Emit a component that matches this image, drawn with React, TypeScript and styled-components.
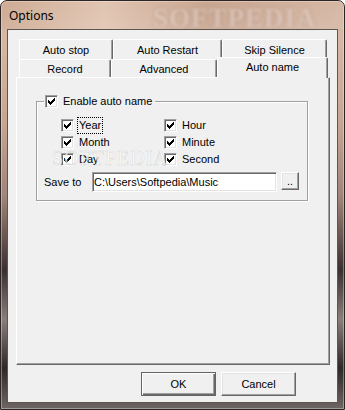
import React from "react";
import styled, { createGlobalStyle, css } from "styled-components";

const GlobalStyle = createGlobalStyle`
  html, body {
    margin: 0;
    padding: 0;
    background: #ffffff;
  }
  body {
    font-family: "Liberation Sans", Arial, sans-serif;
    font-size: 11px;
    color: #000;
  }
`;

const TOP_TABS = [
  { label: "Auto stop", width: 94 },
  { label: "Auto Restart", width: 109 },
  { label: "Skip Silence", width: 105 },
];

const FRONT_TABS = [
  { label: "Record", width: 92, selected: false },
  { label: "Advanced", width: 106, selected: false },
  { label: "Auto name", width: 111, selected: true },
];

// row order: left column, right column
const NAME_PARTS = ["Year", "Hour", "Month", "Minute", "Day", "Second"];

// classic 7x7 check glyph, one 3px column per x
const CHECK_PATH = [2, 3, 4, 3, 2, 1, 0]
  .map((y, x) => `M${x} ${y}h1v3h-1z`)
  .join("");

const Check = () => (
  <CheckBox>
    <svg width="7" height="7" viewBox="0 0 7 7" shapeRendering="crispEdges">
      <path d={CHECK_PATH} fill="#000" />
    </svg>
  </CheckBox>
);

const App = () => {
  return (
    <>
      <GlobalStyle />
      <Window>
        <TitleBar>
          <Title>Options</Title>
        </TitleBar>
        <Client>
          <Tabs>
            <TabRow $h={20}>
              {TOP_TABS.map((t) => (
                <Tab key={t.label} $w={t.width} $h={20}>
                  {t.label}
                </Tab>
              ))}
            </TabRow>
            <TabRow $h={18}>
              {FRONT_TABS.map((t) => (
                <Tab
                  key={t.label}
                  $w={t.width}
                  $h={t.selected ? 21 : 18}
                  $selected={t.selected}
                >
                  {t.label}
                </Tab>
              ))}
            </TabRow>
            <Panel>
              <Group>
                <Legend>
                  <Check />
                  <span>Enable auto name</span>
                </Legend>
                <CheckGrid>
                  {NAME_PARTS.map((name) => (
                    <CheckItem key={name}>
                      <Check />
                      <ItemLabel $focused={name === "Year"}>{name}</ItemLabel>
                    </CheckItem>
                  ))}
                </CheckGrid>
                <SaveRow>
                  <SaveLabel>Save to</SaveLabel>
                  <PathField readOnly value="C:\Users\Softpedia\Music" />
                  <BrowseButton>..</BrowseButton>
                </SaveRow>
              </Group>
            </Panel>
          </Tabs>
          <ButtonRow>
            <DialogButton $default>OK</DialogButton>
            <DialogButton>Cancel</DialogButton>
          </ButtonRow>
        </Client>
      </Window>
    </>
  );
};

const Window = styled.div`
  box-sizing: border-box;
  width: 345px;
  height: 410px;
  display: flex;
  flex-direction: column;
  padding: 0 6px 6px 6px;
  border: 1px solid #2e2624;
  border-radius: 7px 7px 0 0;
  background: linear-gradient(
    180deg,
    #cfae98 0%,
    #d6b8a4 8%,
    #c6a692 30%,
    #a08478 48%,
    #3a3030 66%,
    #8a7e7a 78%,
    #2e2828 90%,
    #6e6664 100%
  );
  box-shadow: inset 0 0 0 1px rgba(255, 255, 255, 0.35);
  overflow: hidden;
`;

/* blurred site watermark sits in the glass, drawn as a decoration */
const TitleBar = styled.div`
  height: 28px;
  flex: none;
  display: flex;
  align-items: center;
  position: relative;
  margin: 0 -6px;
  padding: 0 7px;
  background: linear-gradient(
    90deg,
    rgba(200, 160, 135, 0.2) 0%,
    rgba(255, 238, 225, 0.35) 30%,
    rgba(150, 110, 90, 0.12) 60%,
    rgba(230, 210, 200, 0.25) 100%
  );

  &::after {
    content: "SOFTPEDIA";
    position: absolute;
    left: 152px;
    top: 2px;
    font-family: "Liberation Serif", serif;
    font-weight: bold;
    font-size: 27px;
    letter-spacing: 1px;
    color: rgba(255, 242, 236, 0.5);
    text-shadow: 0 0 3px rgba(110, 70, 55, 0.35);
    filter: blur(1.4px);
    pointer-events: none;
  }
`;

const Title = styled.span`
  font-family: "Noto Sans", "Open Sans", sans-serif;
  font-size: 12px;
  color: #000;
  margin-left: 1px;
  margin-top: 1px;
`;

const Client = styled.div`
  flex: 1;
  display: flex;
  flex-direction: column;
  padding: 9px 0 0 8px;
  background: #f0f0f0;
  border: 1px solid #5e5450;
`;

const Tabs = styled.div`
  width: 314px;
  display: flex;
  flex-direction: column;
`;

const TabRow = styled.div<{ $h: number }>`
  height: ${(p) => p.$h}px;
  display: flex;
  align-items: flex-end;
  margin-left: 3px;
`;

const Tab = styled.div<{ $w: number; $h: number; $selected?: boolean }>`
  box-sizing: border-box;
  flex: none;
  width: ${(p) => p.$w}px;
  height: ${(p) => p.$h}px;
  display: flex;
  align-items: center;
  justify-content: center;
  background: #f0f0f0;
  border-top: 1px solid #ffffff;
  border-left: 1px solid #ffffff;
  border-right: 1px solid #696969;
  border-radius: 2px 2px 0 0;
  box-shadow: inset -1px 0 0 #a0a0a0;
  white-space: nowrap;
  ${(p) =>
    p.$selected &&
    css`
      position: relative;
      z-index: 1;
      margin-bottom: -1px;
      padding-bottom: 2px;
    `}
`;

/* page watermark over the panel, as in the screenshot */
const Panel = styled.div`
  position: relative;
  box-sizing: border-box;
  height: 288px;
  padding: 15px 0 0 19px;
  border-top: 1px solid #ffffff;
  border-left: 1px solid #ffffff;
  border-right: 1px solid #696969;
  border-bottom: 1px solid #696969;
  box-shadow: inset -1px -1px 0 #a0a0a0;

  &::after {
    content: "SOFTPEDIA";
    position: absolute;
    left: 35px;
    top: 69px;
    font-family: "Liberation Serif", serif;
    font-size: 20px;
    letter-spacing: 1px;
    color: rgba(255, 255, 255, 0.75);
    -webkit-text-stroke: 0.6px rgba(150, 150, 150, 0.3);
    pointer-events: none;
  }
`;

const Group = styled.fieldset`
  box-sizing: border-box;
  width: 272px;
  margin: 0;
  padding: 8px 8px 8px 7px;
  min-width: 0;
  border: 1px solid #a0a0a0;
  box-shadow: 1px 1px 0 #ffffff, inset 1px 1px 0 #ffffff;
`;

const Legend = styled.legend`
  display: flex;
  align-items: center;
  gap: 5px;
  height: 16px;
  padding: 0 3px 0 1px;
  background: #f0f0f0;
`;

const CheckBox = styled.span`
  box-sizing: border-box;
  flex: none;
  width: 13px;
  height: 13px;
  display: flex;
  align-items: center;
  justify-content: center;
  background: #ffffff;
  border: 1px solid;
  border-color: #a0a0a0 #ffffff #ffffff #a0a0a0;
  box-shadow: inset 1px 1px 0 #696969, inset -1px -1px 0 #e3e3e3;
`;

const CheckGrid = styled.div`
  display: grid;
  grid-template-columns: 103px auto;
  grid-auto-rows: 17px;
  margin-left: 17px;
`;

const CheckItem = styled.div`
  display: flex;
  align-items: center;
  gap: 3px;
`;

const ItemLabel = styled.span<{ $focused?: boolean }>`
  box-sizing: border-box;
  height: 17px;
  line-height: 15px;
  padding: 0 1px;
  border: 1px dotted ${(p) => (p.$focused ? "#000" : "transparent")};
`;

const SaveRow = styled.div`
  display: flex;
  align-items: flex-start;
  margin-top: 4px;
`;

const SaveLabel = styled.span`
  width: 48px;
  line-height: 20px;
  flex: none;
`;

const PathField = styled.input`
  box-sizing: border-box;
  width: 185px;
  height: 20px;
  margin: 0;
  padding: 0 0 0 1px;
  font-family: "Liberation Sans", Arial, sans-serif;
  font-size: 11px;
  color: #000;
  background: #ffffff;
  border: 1px solid;
  border-color: #a0a0a0 #ffffff #ffffff #a0a0a0;
  box-shadow: inset 1px 1px 0 #696969, inset -1px -1px 0 #e3e3e3;
  outline: none;
`;

const RaisedButton = css`
  box-sizing: border-box;
  margin: 0;
  padding: 0;
  font-family: "Liberation Sans", Arial, sans-serif;
  font-size: 11px;
  color: #000;
  background: #f0f0f0;
  border: 1px solid;
  border-color: #ffffff #696969 #696969 #ffffff;
  box-shadow: inset -1px -1px 0 #a0a0a0, inset 1px 1px 0 #e3e3e3;
`;

const BrowseButton = styled.button`
  ${RaisedButton};
  width: 18px;
  height: 18px;
  margin-left: 4px;
  line-height: 12px;
`;

const ButtonRow = styled.div`
  display: flex;
  justify-content: flex-end;
  gap: 5px;
  margin-top: 7px;
  padding-right: 41px;
`;

const DialogButton = styled.button<{ $default?: boolean }>`
  ${RaisedButton};
  width: 75px;
  height: 24px;
  ${(p) =>
    p.$default &&
    css`
      border-color: #646464;
      box-shadow: inset 1px 1px 0 #ffffff, inset -1px -1px 0 #696969,
        inset -2px -2px 0 #a0a0a0;
    `}
`;

export default App;
